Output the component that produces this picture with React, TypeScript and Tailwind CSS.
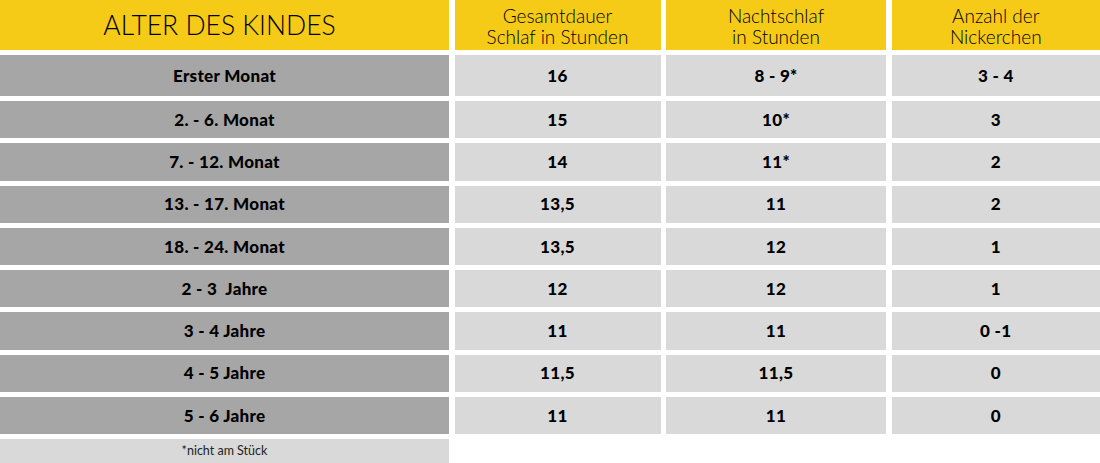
const rows = [
  ['Erster Monat', '16', '8 - 9*', '3 - 4'],
  ['2. - 6. Monat', '15', '10*', '3'],
  ['7. - 12. Monat', '14', '11*', '2'],
  ['13. - 17. Monat', '13,5', '11', '2'],
  ['18. - 24. Monat', '13,5', '12', '1'],
  ['2 - 3  Jahre', '12', '12', '1'],
  ['3 - 4 Jahre', '11', '11', '0 -1'],
  ['4 - 5 Jahre', '11,5', '11,5', '0'],
  ['5 - 6 Jahre', '11', '11', '0'],
];

const cols = 'grid grid-cols-[449px_206px_220px_1fr] gap-x-[5.5px]';
const head = 'bg-[#f5cb17] flex flex-col items-center justify-center text-[19px] leading-[21px] font-light text-black pt-[1px]';

export default function App() {
  return (
    <div className="w-[1100px] h-[463px] overflow-hidden bg-white text-black font-['Lato','Liberation_Sans',sans-serif]">
      <div className={`${cols} h-[50px]`}>
        <div className="bg-[#f5cb17] flex items-center justify-center text-[26.5px] font-light text-black pt-[2px] pr-[10px]">ALTER DES KINDES</div>
        <div className={head}>
          <span>Gesamtdauer</span>
          <span>Schlaf in Stunden</span>
        </div>
        <div className={head}>
          <span>Nachtschlaf</span>
          <span>in Stunden</span>
        </div>
        <div className={head}>
          <span>Anzahl der</span>
          <span>Nickerchen</span>
        </div>
      </div>
      <div className="flex flex-col gap-y-[5px] mt-[5px]">
        {rows.map((r, i) => (
          <div key={i} className={`${cols} ${i === 0 ? 'h-[41px]' : 'h-[37.25px]'} text-[17px] font-black tracking-[0.3px]`}>
            <div className="bg-[#a6a6a6] flex items-center justify-center whitespace-pre">{r[0]}</div>
            <div className="bg-[#d9d9d9] flex items-center justify-center">{r[1]}</div>
            <div className="bg-[#d9d9d9] flex items-center justify-center">{r[2]}</div>
            <div className="bg-[#d9d9d9] flex items-center justify-center">{r[3]}</div>
          </div>
        ))}
        <div className={`${cols} h-[26px]`}>
          <div className="bg-[#d9d9d9] flex items-center justify-center text-[12.5px] text-[#222] pb-[2px]">*nicht am Stück</div>
        </div>
      </div>
    </div>
  );
}
